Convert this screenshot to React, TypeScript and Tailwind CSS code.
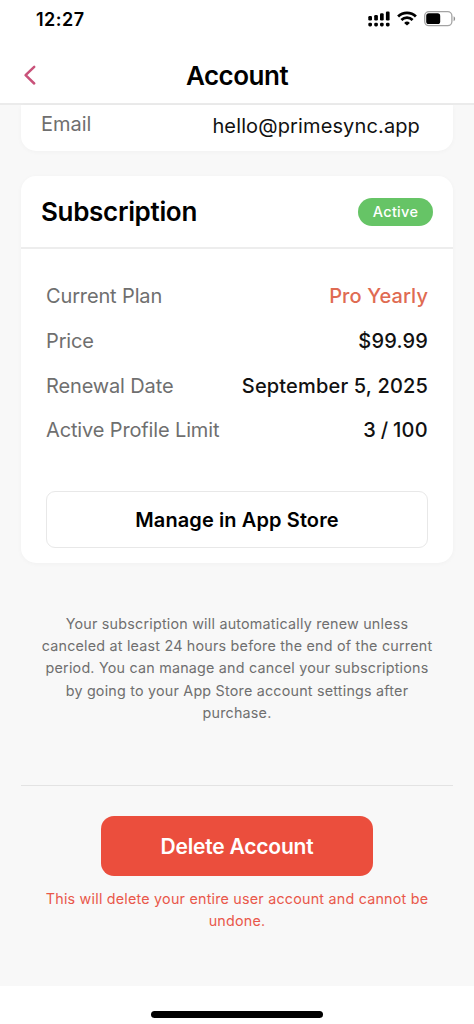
import React from 'react';

interface DetailRowProps {
  label: string;
  value: string;
  valueClass?: string;
}

const DetailRow: React.FC<DetailRowProps> = ({ label, value, valueClass = 'text-[#111111] tracking-[0.17px]' }) => (
  <div className="flex items-center justify-between h-[44.7px] text-[20px]">
    <span className="text-[#6f6f6f] tracking-[-0.14px]">{label}</span>
    <span className={`font-medium ${valueClass}`}>{value}</span>
  </div>
);

const SignalIcon = () => (
  <svg width="22" height="16" viewBox="0 0 22 16" fill="black">
    <rect x="0.3" y="5" width="3.7" height="4.4" rx="1.2" />
    <rect x="6.2" y="4" width="3.7" height="5.4" rx="1.2" />
    <rect x="12" y="2.2" width="3.7" height="7.2" rx="1.2" />
    <rect x="17.9" y="0.6" width="3.7" height="8.8" rx="1.2" />
    <rect x="0.3" y="11.7" width="3.7" height="3.8" rx="1.4" />
    <rect x="6.2" y="11.7" width="3.7" height="3.8" rx="1.4" />
    <rect x="12" y="11.7" width="3.7" height="3.8" rx="1.4" />
    <rect x="17.9" y="11.7" width="3.7" height="3.8" rx="1.4" />
  </svg>
);

const WifiIcon = () => (
  <svg width="20" height="15" viewBox="0 0 20 15" fill="none" stroke="black" strokeWidth="2.8">
    <path d="M1.1 5.4a12.8 12.8 0 0 1 17.8 0" />
    <path d="M4.4 8.9a8.1 8.1 0 0 1 11.2 0" />
    <path d="M10 14.6l-2.9-2.7a4.1 4.1 0 0 1 5.8 0z" fill="black" stroke="none" />
  </svg>
);

const BatteryIcon = () => (
  <svg width="32" height="16" viewBox="0 0 32 16" fill="none">
    <rect x="0.7" y="0.7" width="27.2" height="14" rx="4.2" stroke="#a3a3a3" strokeWidth="1.3" />
    <rect x="2.2" y="2.3" width="14" height="10.8" rx="2.6" fill="black" />
    <path d="M29.6 5.2c2 .9 2 4.1 0 5z" fill="#8f8f8f" />
  </svg>
);

const StatusBar = () => (
  <div className="flex h-[46px] shrink-0 items-start justify-between pl-[36px] pr-[18px] pt-[8px]">
    <span className="pt-px text-[18px] leading-[22px] font-semibold tracking-[0.5px]">12:27</span>
    <div className="flex items-start gap-[7px] pt-[3px]">
      <SignalIcon />
      <WifiIcon />
      <BatteryIcon />
    </div>
  </div>
);

const App = () => {
  return (
    <div
      className="flex h-[1024px] w-[474px] flex-col overflow-hidden bg-white text-black"
      style={{ fontFamily: 'Inter, "Liberation Sans", sans-serif' }}
    >
      <StatusBar />

      <header className="grid h-[59px] shrink-0 grid-cols-[1fr_auto_1fr] items-center border-b-2 border-[#ebebeb] px-[23px]">
        <button aria-label="Back">
          <svg width="14" height="22" viewBox="0 0 14 22" fill="none" stroke="#c9527a" strokeWidth="2.5" strokeLinecap="round" strokeLinejoin="round">
            <path d="M11.2 2.9L2.6 11.2l8.6 8.3" />
          </svg>
        </button>
        <h1 className="pt-px text-[26px] font-semibold tracking-[-0.5px]">Account</h1>
      </header>

      <main className="flex h-[881px] shrink-0 flex-col bg-[#f8f8f8] px-[21px]">
        {/* bottom edge of the profile card, scrolled under the header */}
        <section className="flex h-[46px] shrink-0 justify-between rounded-b-[15px] bg-white pl-5 pr-[33px] text-[20px] leading-6 shadow-[0_1px_5px_rgba(0,0,0,0.03)]">
          <span className="pt-[7px] text-[#6f6f6f]">Email</span>
          <span className="pt-[9px] tracking-[0.13px] text-[#111111]">hello@primesync.app</span>
        </section>

        <section className="mt-[25px] h-[387px] shrink-0 rounded-[15px] bg-white shadow-[0_1px_5px_rgba(0,0,0,0.03)]">
          <div className="flex h-[73px] items-center justify-between border-b-2 border-[#ededed] px-5">
            <h2 className="text-[26px] font-semibold tracking-[-0.32px]">Subscription</h2>
            <span className="flex h-[28px] w-[75px] items-center justify-center rounded-full bg-[#66c466] text-[14.5px] font-medium tracking-[0.3px] text-white">
              Active
            </span>
          </div>
          <div className="px-[25px] pt-[25px]">
            <DetailRow label="Current Plan" value="Pro Yearly" valueClass="text-[#df6b52] tracking-[0.1px]" />
            <DetailRow label="Price" value="$99.99" />
            <DetailRow label="Renewal Date" value="September 5, 2025" />
            <DetailRow label="Active Profile Limit" value="3 / 100" valueClass="text-[#111111] [word-spacing:-1px] tracking-[0.3px]" />
            <button className="mt-[38.7px] h-[57px] w-full rounded-[9px] border-[1.5px] border-[#e8e8e8] pt-px text-[20px] font-semibold tracking-[0.1px]">
              Manage in App Store
            </button>
          </div>
        </section>

        <p className="mt-[50px] shrink-0 text-center text-[14.3px] leading-[22.2px] tracking-[0.22px] text-[#6f6f6f]">
          Your subscription will automatically renew unless
          <br />
          canceled at least 24 hours before the end of the current
          <br />
          period. You can manage and cancel your subscriptions
          <br />
          by going to your App Store account settings after
          <br />
          purchase.
        </p>

        <div className="mt-[61px] flex shrink-0 flex-col items-center border-t border-[#e3e3e3] pt-[30px]">
          <button className="h-[60px] w-[272px] rounded-[13px] bg-[#eb4e3d] pt-px text-[21px] font-semibold tracking-[-0.2px] text-white">
            Delete Account
          </button>
          <p className="mt-[12px] text-center text-[14.3px] leading-[22.2px] tracking-[0.22px] text-[#e9574a]">
            This will delete your entire user account and cannot be
            <br />
            undone.
          </p>
        </div>
      </main>

      <footer className="flex flex-1 items-start justify-center bg-white pt-[25px]">
        <div className="h-[7px] w-[172px] rounded-full bg-black" />
      </footer>
    </div>
  );
};

export default App;
